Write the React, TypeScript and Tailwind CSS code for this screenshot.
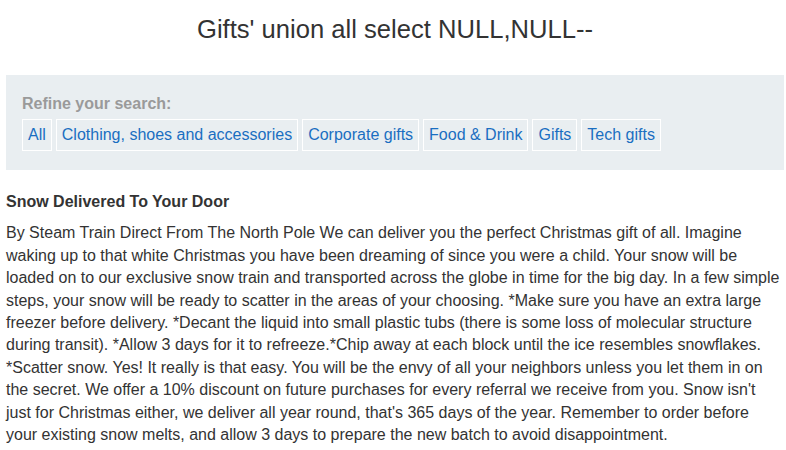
export default function App() {
  const cats = [
    "All",
    "Clothing, shoes and accessories",
    "Corporate gifts",
    "Food & Drink",
    "Gifts",
    "Tech gifts",
  ];
  return (
    <div className="min-h-[450px] bg-white text-[#333] font-['Liberation_Sans',Arial,sans-serif] pl-[6px] pr-[2px]">
      <h1 className="pt-[15px] text-center text-[25.6px] leading-[29.4px] font-normal text-[#333]">
        Gifts' union all select NULL,NULL--
      </h1>
      <div className="mt-[30.6px] bg-[#e9eef1] px-[16px] pt-[20px] pb-[19px]">
        <div className="text-[16px] leading-[18px] font-bold text-[#9a9a9a]">Refine your search:</div>
        <div className="mt-[6px] flex flex-wrap gap-[4px]">
          {cats.map((c) => (
            <a
              key={c}
              href="#"
              className="flex h-[32px] items-center border border-white px-[5px] text-[16px] text-[#1a6ec1]"
            >
              {c}
            </a>
          ))}
        </div>
      </div>
      <h3 className="mt-[23px] text-[16px] leading-[18.4px] font-bold text-[#333]">
        Snow Delivered To Your Door
      </h3>
      <p className="mt-[11px] text-[16px] leading-[22.4px] text-[#333]">
        By Steam Train Direct From The North Pole We can deliver you the perfect Christmas gift of all. Imagine waking up to that white Christmas you have been dreaming of since you were a child. Your snow will be loaded on to our exclusive snow train and transported across the globe in time for the big day. In a few simple steps, your snow will be ready to scatter in the areas of your choosing. *Make sure you have an extra large freezer before delivery. *Decant the liquid into small plastic tubs (there is some loss of molecular structure during transit). *Allow 3 days for it to refreeze.*Chip away at each block until the ice resembles snowflakes. *Scatter snow. Yes! It really is that easy. You will be the envy of all your neighbors unless you let them in on the secret. We offer a 10% discount on future purchases for every referral we receive from you. Snow isn't just for Christmas either, we deliver all year round, that's 365 days of the year. Remember to order before your existing snow melts, and allow 3 days to prepare the new batch to avoid disappointment.
      </p>
    </div>
  );
}
